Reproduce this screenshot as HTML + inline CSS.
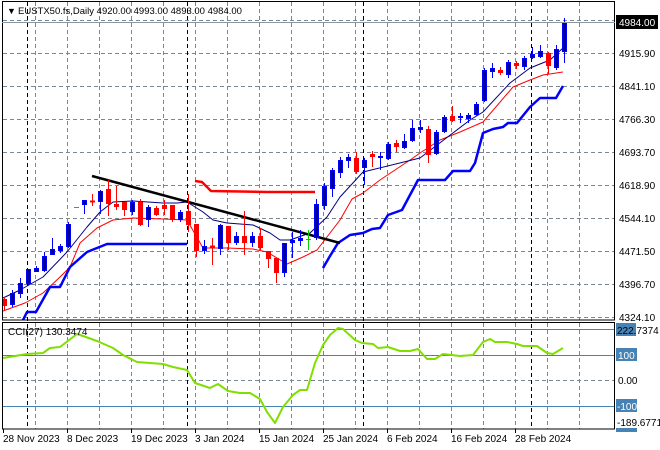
<!DOCTYPE html>
<html><head><meta charset="utf-8"><style>
html,body{margin:0;padding:0;background:#fff;}
svg{display:block;font-family:"Liberation Sans",sans-serif;font-size:10px;}
</style></head><body>
<svg id="c" width="660" height="450" viewBox="0 0 660 450" xmlns="http://www.w3.org/2000/svg">
<rect width="660" height="450" fill="#fff"/>
<g id="grid" stroke="#7a8692" stroke-width="1" stroke-dasharray="4,3" fill="none"></g>
<g id="cci" fill="none"></g>
<g id="lines" fill="none"></g>
<g id="candles"></g>
<rect x="2.5" y="1.5" width="612" height="318.5" fill="none" stroke="#000"/>
<rect x="2.5" y="322.5" width="612" height="106.5" fill="none" stroke="#000"/>
<line x1="2" y1="22.5" x2="615" y2="22.5" stroke="#8a96a2"/>
<g fill="#000">
<text x="7" y="14" font-size="9">▼</text>
<text x="18" y="14" font-size="9.5">EUSTX50.fs,Daily  4920.00 4993.00 4893.00 4984.00</text>
<text x="8" y="335">CCI(27) 130.3474</text>
</g>
<rect x="616" y="15" width="42" height="14" fill="#000"/>
<text x="619" y="26" fill="#fff">4984.00</text>
<g fill="#000">
<text x="619" y="57">4915.90</text>
<text x="619" y="90">4841.10</text>
<text x="619" y="123">4766.30</text>
<text x="619" y="156">4693.70</text>
<text x="619" y="189">4618.90</text>
<text x="619" y="222">4544.10</text>
<text x="619" y="255">4471.50</text>
<text x="619" y="288">4396.70</text>
<text x="619" y="321">4324.10</text>
</g>
<rect x="616" y="323" width="20" height="13" fill="#4682b4"/>
<text x="617" y="334" fill="#000">222.7374</text>
<rect x="616" y="348" width="21" height="13" fill="#4682b4"/>
<text x="618" y="359" fill="#fff">100</text>
<text x="618" y="384" fill="#000">0.00</text>
<rect x="616" y="399" width="21" height="13" fill="#4682b4"/>
<text x="617" y="410" fill="#fff">-100</text>
<rect x="616" y="428" width="21" height="4" fill="#4682b4"/>
<text x="617" y="426" fill="#000">-189.6771</text>
<g fill="#000">
<text x="3" y="442">28 Nov 2023</text>
<text x="67" y="442">8 Dec 2023</text>
<text x="131" y="442">19 Dec 2023</text>
<text x="195" y="442">3 Jan 2024</text>
<text x="259" y="442">15 Jan 2024</text>
<text x="323" y="442">25 Jan 2024</text>
<text x="387" y="442">6 Feb 2024</text>
<text x="451" y="442">16 Feb 2024</text>
<text x="515" y="442">28 Feb 2024</text>
</g>
</svg>
<script>
var NS="http://www.w3.org/2000/svg";
function el(p,t,a){var e=document.createElementNS(NS,t);for(var k in a)e.setAttribute(k,a[k]);document.getElementById(p).appendChild(e);return e;}
[20,53,86,119,152,185,218,251,284,317,380].forEach(function(y){el("grid","line",{x1:3,x2:614,y1:y+.5,y2:y+.5});});
[35,67,99,131,163,195,227,259,291,323,355,387,419,451,483,515,547,579].forEach(function(x){el("grid","line",{x1:x+.5,x2:x+.5,y1:2,y2:320});el("grid","line",{x1:x+.5,x2:x+.5,y1:323,y2:429});});
[27,187,363,531].forEach(function(x){el("grid","line",{x1:x+.5,x2:x+.5,y1:2,y2:429,stroke:"#000"});});
[3,67,131,195,259,323,387,451,515].forEach(function(x){el("grid","line",{x1:x+.5,x2:x+.5,y1:429,y2:433,stroke:"#000","stroke-dasharray":"none"});});
[329,355,406].forEach(function(y){el("cci","line",{x1:3,x2:614,y1:y+.5,y2:y+.5,stroke:"#4682b4"});});
function pl(p,pts,col,w){el(p,"polyline",{points:pts.map(function(a){return a.join(",")}).join(" "),stroke:col,"stroke-width":w,"stroke-linejoin":"round"});}
pl("cci",[[3,358],[27,354],[43,353],[50,348],[60,347],[77,334],[83,336],[97,341],[113,348],[123,355],[137,362],[150,363],[163,364],[173,367],[187,370],[195,383],[210,388],[218,384],[228,391],[240,393],[250,393],[260,399],[267,412],[275,423],[283,407],[293,395],[300,390],[307,390],[315,363],[323,345],[330,335],[338,328],[343,329],[355,340],[362,343],[373,344],[378,348],[388,347],[400,351],[410,351],[418,349],[427,359],[435,359],[443,354],[460,356],[473,355],[483,342],[490,339],[495,342],[507,342],[517,344],[523,346],[537,346],[547,353],[553,354],[563,348]],"#7fe000",2);
pl("lines",[[3,311],[25,303],[43,293],[60,277],[70,267],[80,243],[97,228],[113,220],[133,218],[163,219],[187,220],[203,248],[227,248],[253,249],[267,252],[287,264],[303,257],[317,250],[330,233],[340,220],[352,199],[363,193],[380,180],[413,158],[420,153],[440,140],[460,132],[483,122],[513,87],[530,80],[543,75],[563,72]],"#ff0000",1);
pl("lines",[[3,298],[20,290],[43,277],[67,252],[87,227],[100,212],[113,202],[133,201],[163,203],[177,203],[187,202],[203,212],[213,220],[227,223],[253,225],[270,233],[280,240],[290,240],[310,233],[327,217],[340,197],[363,172],[420,158],[470,120],[483,112],[510,83],[530,68],[550,60],[563,48]],"#000080",1);
pl("lines",[[23,320],[27,312],[36,312],[50,287],[60,287],[70,267],[87,252],[107,244],[187,244]],"#0000ff",2.5);
pl("lines",[[323,268],[330,256],[338,243],[350,235],[363,233],[372,229],[380,228],[388,215],[402,210],[418,180],[445,180],[453,171],[470,171],[475,163],[483,133],[493,129],[503,127],[508,123],[517,123],[530,107],[540,98],[556,98],[563,86]],"#0000ff",2.5);
pl("lines",[[195,181],[202,182],[211,191],[267,192],[315,192]],"#ff0000",2.5);
el("lines","line",{x1:92,y1:176,x2:340,y2:243,stroke:"#000","stroke-width":2.5});
var D=[[299,306,297,310],[305,293,290,307],[294,283,278,298],[284,269,269,285],[272,268,266,272],[271,256,252,272],[255,249,238,255],[251,246,244,253],[247,224,222,248],[207,207,207,207,'h'],[205,200,200,214],[201,201,194,206],[202,191,190,214],[189,204,180,216],[204,207,186,210],[202,210,202,216],[212,202,200,215],[202,225,199,226],[220,207,205,227],[208,215,206,216],[205,209,200,215],
[205,220,205,222],[220,212,210,222],[211,225,194,232],[224,251,224,257],[251,246,240,254],[246,246,238,265],[249,225,224,255],[226,243,226,250],[243,236,232,245],[236,243,211,255],[243,236,232,247],[236,248,228,250],[251,259,251,268],[258,273,258,283],[273,243,243,277],[243,240,232,258],[241,238,230,246],[239,239,230,250,'g'],[238,204,199,240],[206,186,183,210],
[189,170,168,197],[173,160,157,178],[161,157,154,168],[158,172,152,174],[168,160,158,185],[154,157,151,167],[158,156,152,170],[159,144,142,160],[143,147,140,152],[148,141,134,149],[141,128,120,142],[130,127,120,133],[129,155,126,163],[154,132,130,155],[132,117,115,133],[116,121,106,122],[118,116,113,123],[119,115,113,123],[115,104,102,116],[101,70,68,102],[72,68,63,78],[70,73,67,75],[75,62,60,78],[63,66,61,69],[67,58,56,70],[58,54,47,59],[57,51,45,58],[53,66,52,74],[68,49,45,70],[52,22,18,63]];
D.forEach(function(d,i){var x=4+8*i,o=d[0],c=d[1],h=d[2],l=d[3];
 if(d[4]=='h'){el("candles","line",{x1:x-2,x2:x+3,y1:o+.5,y2:o+.5,stroke:"#00d000"});return;}
 if(d[4]=='g'){el("candles","line",{x1:x+.5,x2:x+.5,y1:h,y2:l,stroke:"#00d000"});el("candles","line",{x1:x-2,x2:x+3,y1:o+.5,y2:o+.5,stroke:"#00d000"});return;}
 var up=c<o,col=up?"#0000ff":"#ff0000",fill=up?"#00008b":"#ff0000";
 el("candles","line",{x1:x+.5,x2:x+.5,y1:h,y2:l,stroke:col});
 var t=Math.min(o,c),b=Math.max(o,c);
 if(b-t<2){el("candles","line",{x1:x-2,x2:x+3,y1:t+.5,y2:t+.5,stroke:col,"stroke-width":2});}
 else el("candles","rect",{x:x-1.5,y:t+.5,width:4,height:b-t-1,fill:fill,stroke:col});
});
</script>
</body></html>
